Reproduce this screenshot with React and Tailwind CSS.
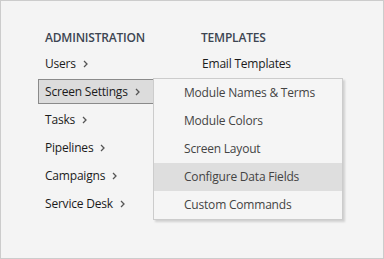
import React from 'react'

const Chevron = () => (
    <svg width="5" height="8" viewBox="0 0 5 8" className="ml-[7px] shrink-0">
        <path d="M1 1 L4 4 L1 7" fill="none" stroke="#555" strokeWidth="1.3" />
    </svg>
)

const adminItems = ['Users', 'Screen Settings', 'Tasks', 'Pipelines', 'Campaigns', 'Service Desk']
const menuItems = ['Module Names & Terms', 'Module Colors', 'Screen Layout', 'Configure Data Fields', 'Custom Commands']

export default function App() {
    return (
        <div className="relative w-[384px] h-[259px] border border-[#cccccc] bg-[#f4f4f4] text-[12px] tracking-[-0.2px] text-[#1b1b1b]"
            style={{ fontFamily: '"Open Sans", "Noto Sans", sans-serif' }}>
            <div className="flex pt-[28px]">
                {/* left column */}
                <div className="pl-[37px] w-[200px]">
                    <div className="pl-[7px] h-[18px] flex items-center font-semibold text-[#3d4551]">ADMINISTRATION</div>
                    <div className="flex flex-col gap-[3px] mt-[4px]">
                        {adminItems.map((item, i) => (
                            <div key={item}
                                className={'self-start h-[25px] flex items-center pl-[6px] pr-[15px] border ' + (i === 1 ? 'bg-[#dcdcdc] border-[#8a8a8a]' : 'border-transparent')}>
                                <span>{item}</span>
                                <Chevron />
                            </div>
                        ))}
                    </div>
                </div>
                {/* right column */}
                <div>
                    <div className="h-[18px] flex items-center font-semibold text-[#3d4551]">TEMPLATES</div>
                    <div className="mt-[4px] h-[25px] flex items-center border border-transparent">Email Templates</div>
                </div>
            </div>

            {/* dropdown */}
            <div className="absolute left-[152px] top-[77px] w-[190px] border border-[#cccccc] bg-[#f5f5f5] shadow-[2px_2px_2px_rgba(0,0,0,0.15)]">
                {menuItems.map((item, i) => (
                    <div key={item}
                        className={'h-[28px] flex items-center pl-[30px] text-[#444]' + (i === 3 ? ' bg-[#dedede]' : '')}>
                        {item}
                    </div>
                ))}
            </div>
        </div>
    )
}
